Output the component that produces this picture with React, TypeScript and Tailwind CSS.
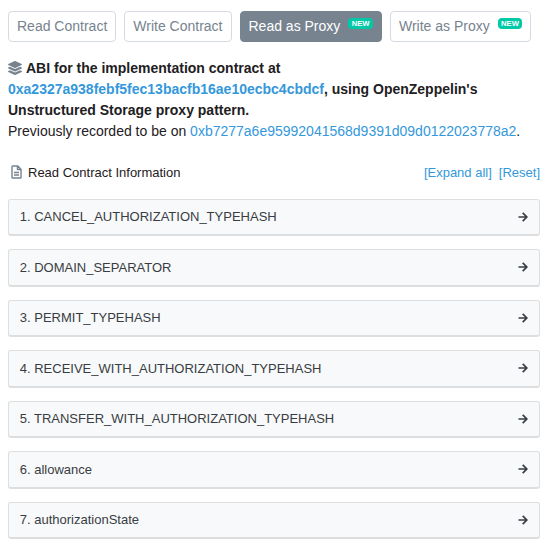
import { FaLayerGroup } from 'react-icons/fa';

interface ProxyTab {
  label: string;
  isNew?: boolean;
  active?: boolean;
}

const TABS: ProxyTab[] = [
  { label: 'Read Contract' },
  { label: 'Write Contract' },
  { label: 'Read as Proxy', isNew: true, active: true },
  { label: 'Write as Proxy', isNew: true },
];

const METHODS = [
  'CANCEL_AUTHORIZATION_TYPEHASH',
  'DOMAIN_SEPARATOR',
  'PERMIT_TYPEHASH',
  'RECEIVE_WITH_AUTHORIZATION_TYPEHASH',
  'TRANSFER_WITH_AUTHORIZATION_TYPEHASH',
  'allowance',
  'authorizationState',
];

function TabButton({ tab }: { tab: ProxyTab }) {
  const colors = tab.active
    ? 'border-[#77838f] bg-[#77838f] text-white'
    : 'border-[#d5dae2] bg-white text-[#77838f]';

  return (
    <button
      className={`flex h-[31px] items-center whitespace-nowrap rounded-[4px] border px-2 text-[14px] leading-[21px] ${colors}`}
    >
      {tab.label}
      {tab.isNew && (
        <span className="relative -top-[3px] ml-[8px] flex h-[11px] w-[24.6px] items-center justify-center rounded-[4px] bg-[#00c9a7] text-[7.7px] font-bold leading-none text-white">
          NEW
        </span>
      )}
    </button>
  );
}

function FileIcon() {
  return (
    <svg
      viewBox="0 0 11 14"
      className="ml-[2.5px] mr-[6.5px] h-[14px] w-[11px] -translate-y-px"
      fill="none"
      stroke="#77838f"
      strokeWidth="1.4"
    >
      <path d="M1.8 1H6.8L10 4.2V12.2Q10 13 9.2 13H1.8Q1 13 1 12.2V1.8Q1 1 1.8 1ZM6.5 1V4.5H10" />
      <path d="M3 7.5H8M3 10H8" />
    </svg>
  );
}

function ArrowRight() {
  return (
    <svg
      viewBox="0 0 10 10"
      className="h-[10px] w-[10px]"
      fill="none"
      stroke="#383d42"
      strokeWidth="1.7"
    >
      <path d="M0.5 5H8.6M4.7 0.9L8.8 5L4.7 9.1" />
    </svg>
  );
}

export default function App() {
  return (
    <div className="h-[545px] w-[547px] overflow-hidden bg-white pl-2 pr-[7px] pt-[11px] font-['Liberation_Sans',Arial,sans-serif] text-[14px] leading-[21px] text-[#1e2022]">
      {/* Contract tabs */}
      <div className="flex gap-2">
        {TABS.map((tab) => (
          <TabButton key={tab.label} tab={tab} />
        ))}
      </div>

      {/* Proxy implementation notice */}
      <div className="mt-[16px]">
        <div className="font-bold">
          <FaLayerGroup className="mr-1 inline h-[14px] w-[14px] align-[-2px] text-[#77838f]" />
          ABI for the implementation contract at
          <br />
          <a className="text-[#3498db]">0xa2327a938febf5fec13bacfb16ae10ecbc4cbdcf</a>, using OpenZeppelin's
          <br />
          Unstructured Storage proxy pattern.
        </div>
        <div>
          Previously recorded to be on{' '}
          <a className="text-[#3498db]">0xb7277a6e95992041568d9391d09d0122023778a2</a>.
        </div>
      </div>

      {/* Section header */}
      <div className="mt-[21px] flex h-[20px] items-center justify-between text-[13px] leading-[20px]">
        <div className="flex items-center">
          <FileIcon />
          Read Contract Information
        </div>
        <div className="flex gap-[7px] text-[#3498db]">
          <a>[Expand all]</a>
          <a>[Reset]</a>
        </div>
      </div>

      {/* Method list */}
      <div className="mt-[15.6px] flex flex-col gap-[13px]">
        {METHODS.map((name, i) => (
          <div
            key={name}
            className="flex h-[37.5px] items-center justify-between rounded-[3px] border border-b-2 border-[#dcdedf] bg-[#f8f9fb] pl-[10.75px] pr-[11px] text-[13px] leading-[19.5px] text-[#383d42]"
          >
            <span>
              {i + 1}. {name}
            </span>
            <ArrowRight />
          </div>
        ))}
      </div>
    </div>
  );
}
